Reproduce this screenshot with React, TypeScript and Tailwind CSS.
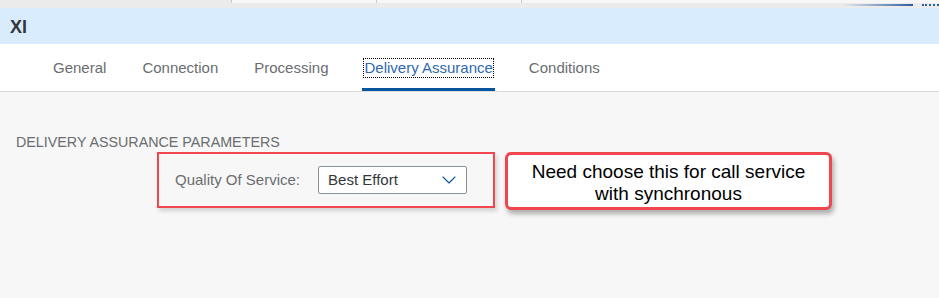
import { ChevronDown } from "lucide-react";

const tabs = ["General", "Connection", "Processing", "Delivery Assurance", "Conditions"];

export default function App() {
  return (
    <main
      className="w-[939px] h-[298px] flex flex-col bg-[#f7f7f7] overflow-hidden"
      style={{ fontFamily: '"Liberation Sans", Arial, sans-serif' }}
    >
      {/* top strip of the shell */}
      <div className="h-2 flex flex-col bg-[#ebebeb]">
        <div className="h-[3px] flex">
          <div className="w-[231px]" />
          <div className="w-[145px] bg-[#f7f7f7] border-l border-[#c9c9c9]" />
          <div className="w-[145px] bg-[#f7f7f7] border-l border-[#c9c9c9]" />
          <div className="flex-1 bg-[#f7f7f7] border-l border-[#c9c9c9]" />
        </div>
        <div className="h-[5px] flex items-start">
          <div className="flex-1" />
          <div className="mt-[1px] w-[70px] h-[2px] bg-gradient-to-r from-[#ebebeb] to-[#2a5f9e]" />
          <div className="w-[9px]" />
          <div className="mt-[1px] w-[17px] h-[2px] border-t-2 border-dotted border-[#2a5f9e]" />
        </div>
      </div>

      {/* object header */}
      <div className="h-9 flex items-center px-[10px] pt-0.5 bg-[#d9ecfd]">
        <span className="text-[18px] font-bold text-[#32363a]">XI</span>
      </div>

      {/* tab bar */}
      <nav className="h-[48px] flex items-stretch gap-8 pl-[51px] bg-white border-b border-[#dcdcdc]">
        {tabs.map((t) => {
          const active = t === "Delivery Assurance";
          return (
            <div
              key={t}
              className={
                active
                  ? "flex items-center px-0.5 pt-1 border-b-[3px] border-[#0854a0]"
                  : "flex items-center px-0.5 pt-1 border-b-[3px] border-transparent"
              }
            >
              <span
                className={
                  active
                    ? "text-[15px] leading-[18px] text-[#2f69b0] outline outline-1 outline-dotted outline-black"
                    : "text-[15px] leading-[18px] text-[#6a6d70]"
                }
              >
                {t}
              </span>
            </div>
          );
        })}
      </nav>

      {/* content */}
      <section className="flex flex-col pt-10">
        <h2 className="pl-4 text-[14.3px] leading-5 text-[#6a6d70]">DELIVERY ASSURANCE PARAMETERS</h2>

        <div className="flex items-start pl-[157px] gap-[10px]">
          <div className="w-[338px] h-[56px] flex items-center border-2 border-[#f0464d] shadow-[2px_3px_4px_rgba(0,0,0,0.15)] pl-4 gap-[18px]">
            <span className="text-[15px] text-[#6a6d70]">Quality Of Service:</span>
            <div className="w-[149px] h-[28px] flex items-center justify-between pl-[9px] pr-[5px] bg-white border border-[#89919a] rounded-[2px]">
              <span className="text-[15px] text-[#32363a]">Best Effort</span>
              <ChevronDown size={24} strokeWidth={1.1} color="#0854a0" />
            </div>
          </div>

          <div className="w-[327px] h-[58px] flex flex-col items-center justify-center pt-1 bg-white border-[3px] border-[#f0464d] rounded-md shadow-[2px_4px_5px_rgba(0,0,0,0.3)]">
            <p className="text-[19px] leading-[22px] text-black text-center">
              Need choose this for call service
              <br />
              with synchronous
            </p>
          </div>
        </div>
      </section>
    </main>
  );
}
